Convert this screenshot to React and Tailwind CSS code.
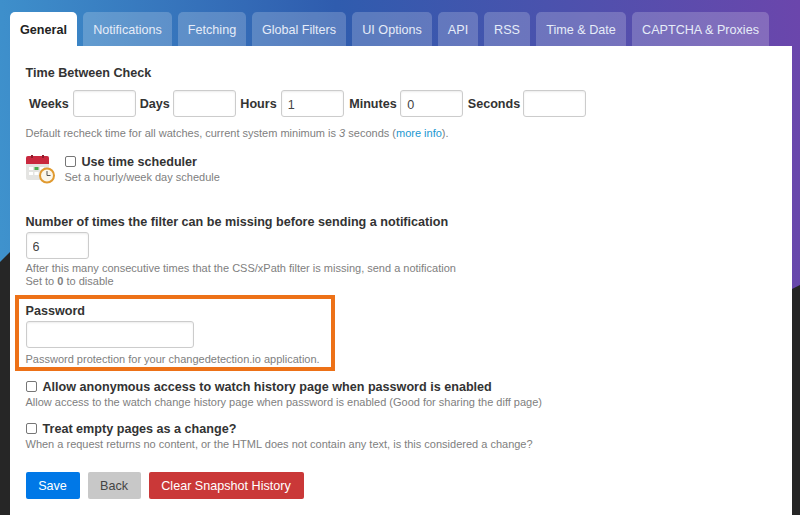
const TABS = ['Notifications', 'Fetching', 'Global Filters', 'UI Options', 'API', 'RSS', 'Time & Date', 'CAPTCHA & Proxies']

const PX = { Notifications: 'w-[89px]', Fetching: 'w-[68px]', 'Global Filters': 'w-[94px]', 'UI Options': 'w-[80px]', API: 'w-[40px]', RSS: 'w-[46px]', 'Time & Date': 'w-[90px]', 'CAPTCHA & Proxies': 'w-[137px]' }

function Field({ label, value, labelClass }) {
  return (
    <>
      <span className={`pt-[2px] text-[12.6px] font-bold text-[#333] ${labelClass}`}>{label}</span>
      <input
        readOnly
        value={value}
        className="h-[27px] w-[63px] rounded-[3px] border border-[#ccc] bg-white px-[6px] pt-[2px] text-[12.6px] text-[#444] shadow-[inset_0_1px_2px_rgba(0,0,0,0.08)]"
      />
    </>
  )
}

function CalendarIcon() {
  return (
    <svg width="32" height="30" viewBox="0 0 32 30" className="mt-[2px] -ml-[1px] shrink-0">
      <rect x="1" y="1" width="23" height="24" rx="2" fill="#e4e4e2" />
      <path d="M1 9V3a2 2 0 0 1 2-2h19a2 2 0 0 1 2 2v6z" fill="#c9283e" />
      <rect x="6" y="0" width="2" height="3" fill="#8c1d2c" />
      <rect x="17" y="0" width="2" height="3" fill="#8c1d2c" />
      <rect x="4" y="12" width="4" height="3" fill="#fff" />
      <rect x="9.5" y="12" width="4" height="3" fill="#4caf50" />
      <rect x="15" y="12" width="4" height="3" fill="#fff" />
      <rect x="4" y="17" width="4" height="3" fill="#fff" />
      <rect x="9.5" y="17" width="4" height="3" fill="#fff" />
      <circle cx="22" cy="20.5" r="7" fill="#fbf6ea" stroke="#e09a30" strokeWidth="2" />
      <path d="M22 16v4.5h3.5" fill="none" stroke="#555" strokeWidth="1" />
    </svg>
  )
}

function Check({ label, help, className }) {
  return (
    <div className={className}>
      <div className="flex h-[16px] items-center">
        <span className="h-[11px] w-[11px] shrink-0 rounded-[2px] border border-[#767676] bg-white" />
        <span className="ml-[6px] pt-[2px] text-[12.6px] leading-[16px] font-bold text-[#333]">{label}</span>
      </div>
      <p className="mt-[1px] text-[11px] leading-[14px] text-[#808080]">{help}</p>
    </div>
  )
}

export default function App() {
  return (
    <div className="relative h-[515px] w-[800px] overflow-hidden bg-[linear-gradient(85deg,#4096cf_0%,#2f5cae_45%,#6b46ac_100%)] font-['Liberation_Sans',Arial,sans-serif]">
      <svg className="absolute inset-0" width="800" height="515">
        <polygon points="0,262 10,252 400,252 792,289 800,285 800,515 0,515" fill="#262626" />
      </svg>
      <div className="relative flex h-[46px] items-end pl-[10px] pt-[12px]">
        <div className="flex h-[34px] w-[67px] items-center justify-center rounded-t-[5px] bg-white pt-[2px] text-[12.6px] font-bold text-[#222]">
          General
        </div>
        <div className="ml-[6px] flex gap-[6px]">
          {TABS.map((t) => (
            <div key={t} className={`flex h-[34px] items-center justify-center rounded-t-[5px] bg-white/20 pt-[2px] text-[12.6px] text-[#e6ecf8] ${PX[t]}`}>
              {t}
            </div>
          ))}
        </div>
      </div>

      <div className="relative ml-[10px] h-[469px] w-[782px] bg-white pl-[15.5px] pt-[18px]">
        <h3 className="h-[16px] text-[12.6px] font-bold leading-[18px] text-[#333]">Time Between Check</h3>
        <div className="mt-[10px] flex items-center pl-[3.5px]">
          <Field label="Weeks" value="" labelClass="mr-[4px]" />
          <Field label="Days" value="" labelClass="ml-[4px] mr-[3px]" />
          <Field label="Hours" value="1" labelClass="ml-[4.5px] mr-[4px]" />
          <Field label="Minutes" value="0" labelClass="ml-[5.5px] mr-[3.5px]" />
          <Field label="Seconds" value="" labelClass="ml-[4.5px] mr-[3px]" />
        </div>
        <p className="mt-[9px] text-[11px] leading-[14px] text-[#808080]">
          Default recheck time for all watches, current system minimum is <i>3</i> seconds (<span className="text-[#1b98d1]">more info</span>).
        </p>

        <div className="mt-[13px] flex">
          <CalendarIcon />
          <Check className="ml-[8px]" label="Use time scheduler" help="Set a hourly/week day schedule" />
        </div>

        <h3 className="mt-[28px] h-[16px] text-[12.6px] font-bold leading-[18px] text-[#333]">Number of times the filter can be missing before sending a notification</h3>
        <input
          readOnly
          value="6"
          className="mt-[3px] block h-[27px] w-[63px] rounded-[3px] border border-[#ccc] bg-white px-[6px] pt-[2px] text-[12.6px] text-[#444] shadow-[inset_0_1px_2px_rgba(0,0,0,0.08)]"
        />
        <p className="mt-[2px] text-[11px] leading-[14px] text-[#808080]">After this many consecutive times that the CSS/xPath filter is missing, send a notification</p>
        <p className="-mt-[1px] text-[11px] leading-[14px] text-[#808080]">Set to <b>0</b> to disable</p>

        <div className="mt-[7px] -ml-[11px] h-[76px] w-[320px] border-[4px] border-[#ed7117] pl-[7px] pt-[3px]">
          <h3 className="h-[16px] text-[12.6px] font-bold leading-[18px] text-[#333]">Password</h3>
          <input readOnly className="mt-[3px] block h-[27px] w-[168px] rounded-[3px] border border-[#ccc] bg-white shadow-[inset_0_1px_2px_rgba(0,0,0,0.08)]" />
          <p className="mt-[4px] whitespace-nowrap text-[11px] leading-[14px] text-[#808080]">Password protection for your changedetection.io application.</p>
        </div>

        <Check className="mt-[7px]" label="Allow anonymous access to watch history page when password is enabled" help="Allow access to the watch change history page when password is enabled (Good for sharing the diff page)" />
        <Check className="mt-[11px]" label="Treat empty pages as a change?" help="When a request returns no content, or the HTML does not contain any text, is this considered a change?" />

        <div className="mt-[21px] flex gap-[8px] text-[12.6px]">
          <div className="flex h-[27px] w-[54px] items-center justify-center rounded-[2px] bg-[#0078e7] pt-[2px] text-white">Save</div>
          <div className="flex h-[27px] w-[53px] items-center justify-center rounded-[2px] bg-[#c8c8c8] pt-[2px] text-[#444]">Back</div>
          <div className="flex h-[27px] w-[155px] items-center justify-center rounded-[2px] bg-[#ca3838] pt-[2px] text-white">Clear Snapshot History</div>
        </div>
      </div>
    </div>
  )
}
